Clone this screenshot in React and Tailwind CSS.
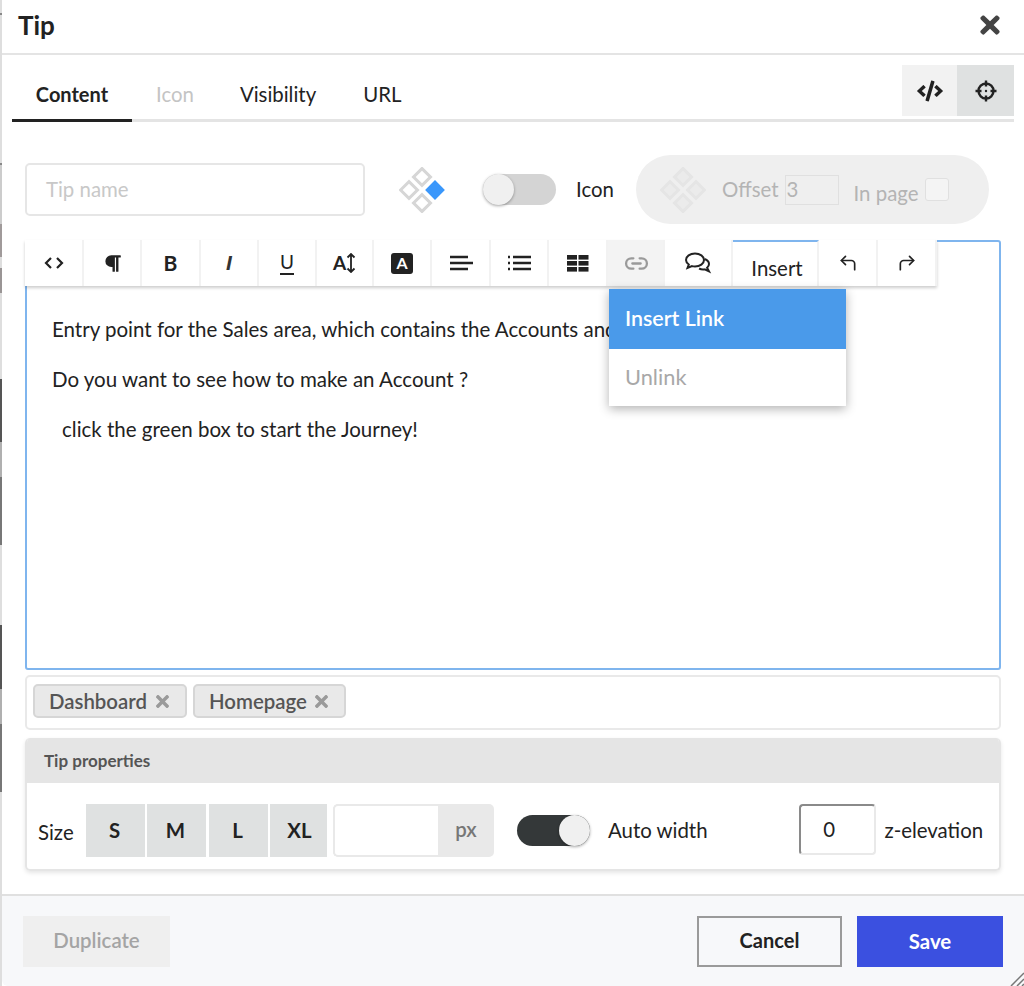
import React from "react";
import { FaTimes, FaCode, FaParagraph } from "react-icons/fa";
import { CornerUpLeft, CornerUpRight, Link2 } from "lucide-react";

const I = ({ children, w = 20, h = 20, vb = "0 0 20 20" }) => (
  <svg width={w} height={h} viewBox={vb} fill="none" stroke="currentColor" strokeWidth="2">{children}</svg>
);

const Diamond = ({ faded }) => (
  <svg width="46" height="46" viewBox="0 0 46 46">
    {[[23, 10], [10, 23], [23, 36]].map(([x, y]) => (
      <rect key={x + "-" + y} x={x - 6} y={y - 6} width="12" height="12" transform={`rotate(45 ${x} ${y})`} fill={faded ? "#ebebeb" : "none"} stroke={faded ? "#e5e5e5" : "#d6d6d6"} strokeWidth="3" />
    ))}
    <rect x={30} y={17} width="12" height="12" transform="rotate(45 36 23)" fill={faded ? "#ebebeb" : "#3a97fb"} stroke={faded ? "#e5e5e5" : "#3a97fb"} strokeWidth={faded ? 3 : 2} />
  </svg>
);

const Tool = ({ w, children, className = "" }) => (
  <div style={{ width: w }} className={`flex h-full shrink-0 items-center justify-center border-r-2 border-[#f2f2f2] text-[#222] ${className}`}>
    {children}
  </div>
);

const Toggle = ({ on }) => (
  <div className={`relative h-[31px] w-[73px] shrink-0 rounded-full ${on ? "bg-[#343839]" : "bg-[#d4d4d4]"}`}>
    <div className={`absolute top-0 h-[31px] w-[31px] rounded-full bg-[#f0f0f0] shadow-[0_1px_3px_rgba(0,0,0,0.35)] ${on ? "right-0" : "left-0"}`} />
  </div>
);

const Tag = ({ children, w }) => (
  <div style={{ width: w }} className="flex h-[34px] shrink-0 items-center justify-between rounded-[5px] border-2 border-[#d6d6d6] bg-[#e9e9e9] pl-[14px] pr-[13px] text-[20.4px] font-semibold text-[#555]">
    <span>{children}</span>
    <FaTimes className="text-[19px] text-[#9a9a9a]" />
  </div>
);

const Size = ({ children, w, className = "pr-[2px]" }) => (
  <div style={{ width: w }} className={`flex h-full shrink-0 items-center justify-center bg-[#dfe1e1] text-[20.4px] font-bold text-[#222] ${className}`}>{children}</div>
);

export default function App() {
  return (
    <div className="flex h-[986px] w-[1024px] overflow-hidden bg-white font-['Lato',sans-serif] text-[20.4px] text-[#222]">
      <div className="flex w-[2px] shrink-0 flex-col bg-[#dedede]">
        <div className="h-[13px]" />
        <div className="h-[2px] bg-[#888]" />
        <div className="h-[148px]" />
        <div className="h-[2px] bg-[#888]" />
        <div className="h-[59px] bg-[#cccccc]" />
        <div className="h-[33px] bg-[#a09a9a]" />
        <div className="h-[11px]" />
        <div className="h-[25px] bg-[#9a9595]" />
        <div className="h-[86px]" />
        <div className="h-[63px] bg-[#555]" />
        <div className="h-[35px] bg-[#b0b0b0]" />
        <div className="h-[68px] bg-[#777]" />
        <div className="h-[80px]" />
        <div className="h-[64px] bg-[#555]" />
        <div className="h-[35px] bg-[#b0b0b0]" />
        <div className="h-[68px] bg-[#777]" />
        <div className="flex-1" />
      </div>
      <div className="relative flex min-w-0 flex-1 flex-col">
        <header className="flex h-[55px] shrink-0 items-center justify-between border-b-2 border-[#e4e4e4] pb-[3px] pl-[16px] pr-[20px]">
          <h1 className="text-[26px] font-bold leading-none text-[#222]">Tip</h1>
          <FaTimes className="text-[28px] text-[#444]" />
        </header>

        <div className="ml-[10px] mr-[10px] mt-[10px] flex h-[57px] shrink-0 items-start justify-between border-b-[3px] border-[#e4e4e4]">
          <div className="flex h-[57px] items-center">
            <div className="flex h-[57px] w-[120px] items-center justify-center border-b-[3px] border-[#222] pt-[3px] text-[20px] font-bold">Content</div>
            <div className="ml-[24px] pt-[2px] text-[#c4c4c4]">Icon</div>
            <div className="ml-[46px] pt-[2px]">Visibility</div>
            <div className="ml-[47px] pt-[2px]">URL</div>
          </div>
          <div className="flex h-[51px]">
            <div className="flex w-[55px] items-center justify-center bg-[#f2f2f2] text-[#222]"><FaCode className="text-[26px]" /></div>
            <div className="flex w-[57px] items-center justify-center bg-[#dfe1e1]">
              <I w={24} h={24} vb="0 0 24 24">
                <circle cx="12" cy="12" r="7.5" strokeWidth="2.4" />
                <path d="M12 1.5v6M12 16.5v6M1.5 12h6M16.5 12h6" strokeWidth="2.4" />
                <circle cx="12" cy="12" r="1.2" fill="currentColor" stroke="none" />
              </I>
            </div>
          </div>
        </div>

        <div className="ml-[23px] mt-[33px] flex h-[69px] shrink-0 items-center">
          <div className="flex h-[53px] w-[340px] items-center rounded-[5px] border-2 border-[#e6e6e6] pl-[19px] text-[#c8c8c8]">Tip name</div>
          <div className="ml-[34px] flex w-[46px] justify-center"><Diamond /></div>
          <div className="ml-[38px]"><Toggle /></div>
          <div className="ml-[20px]">Icon</div>
          <div className="ml-[22px] flex h-[69px] w-[353px] items-center rounded-full bg-[#efefef] pl-[24px]">
            <Diamond faded />
            <span className="ml-[16px] pb-[1px] text-[#b4b4b4]">Offset</span>
            <div className="ml-[6px] flex h-[30px] w-[54px] items-center border border-[#e0e0e0] pl-[1px] text-[#b4b4b4]">3</div>
            <span className="ml-[15px] mt-[8px] text-[#b4b4b4]">In page</span>
            <div className="ml-[7px] h-[23px] w-[24px] rounded-[3px] border border-[#e0e0e0] bg-[#f4f4f4]" />
          </div>
        </div>

        <div className="ml-[23px] mt-[16px] h-[430px] w-[976px] shrink-0 rounded-[3px] border-2 border-[#7fb5ee]">
          <div className="relative -ml-[2px] -mt-[2px] flex h-[46px] w-[912px] bg-white shadow-[0_2px_3px_rgba(0,0,0,0.2)]">
            <Tool w={59}><I><path d="M7 5 2 10l5 5M13 5l5 5-5 5" strokeWidth="2.2" /></I></Tool>
            <Tool w={58}><FaParagraph className="text-[19px]" /></Tool>
            <Tool w={59}><span className="text-[21px] font-bold">B</span></Tool>
            <Tool w={58}><span className="font-['Liberation_Sans',sans-serif] text-[21px] font-bold italic text-[#333]">I</span></Tool>
            <Tool w={58}>
              <span className="border-b-2 border-[#222] text-[19px] leading-[22px]">U</span>
            </Tool>
            <Tool w={57}>
              <span className="text-[19px] font-bold">A</span>
              <I w={10} h={20} vb="0 0 10 20"><path d="M5 1v18M1.5 4.5 5 1l3.5 3.5M1.5 15.5 5 19l3.5-3.5" strokeWidth="1.8" /></I>
            </Tool>
            <Tool w={58}>
              <div className="flex h-[21px] w-[22px] items-center justify-center rounded-[3px] bg-[#222] text-[16px] font-bold leading-none text-white">A</div>
            </Tool>
            <Tool w={59}><I w={24} h={20} vb="0 0 24 20"><path d="M1 4h18M1 10h23M1 16h18" strokeWidth="2.4" /></I></Tool>
            <Tool w={58}><I w={24} h={20} vb="0 0 24 20"><path d="M6 4h18M6 10h18M6 16h18" strokeWidth="2.4" /><path d="M1 4h2M1 10h2M1 16h2" strokeWidth="2.4" /></I></Tool>
            <Tool w={59}>
              <svg width="22" height="17" viewBox="0 0 22 17" fill="#222">
                <rect x="0" y="0" width="10" height="4.6" /><rect x="11.5" y="0" width="10" height="4.6" />
                <rect x="0" y="6" width="10" height="4.6" /><rect x="11.5" y="6" width="10" height="4.6" />
                <rect x="0" y="12" width="10" height="4.6" /><rect x="11.5" y="12" width="10" height="4.6" />
              </svg>
            </Tool>
            <Tool w={57} className="bg-[#f3f3f3]"><Link2 size={25} className="ml-[2px] text-[#9a9a9a]" strokeWidth={2.2} /></Tool>
            <Tool w={68}>
              <svg width="28" height="22" viewBox="0 0 28 22" fill="none" stroke="#222" strokeWidth="2">
                <path d="M11 1.5c5 0 9 2.900 9 6.500s-4 6.500-9 6.500c-1 0-2-.1-3-.4l-4.500 1.900 1.300-3.500C3 11.200 2 9.700 2 8c0-3.600 4-6.500 9-6.500Z" />
                <path d="M20.5 7c2.800 1 4.500 3 4.500 5 0 1.400-.7 2.700-1.900 3.700l1.900 3.600-4.300-1.900c-.6.100-1.200.1-1.700.1-1.500 0-2.800-.4-3.900-1" />
              </svg>
            </Tool>
            <Tool w={86} className="border-t-2 border-t-[#7fb5ee]"><span className="-mb-[8px] ml-[4px] leading-none">Insert</span></Tool>
            <Tool w={59}><CornerUpLeft size={20} strokeWidth={2} /></Tool>
            <Tool w={59} className="border-r-0"><CornerUpRight size={20} strokeWidth={2} /></Tool>

            <div className="absolute left-[584px] top-[49px] z-10 w-[237px] bg-white shadow-[0_3px_10px_rgba(0,0,0,0.3)]">
              <div className="flex h-[60px] items-center bg-[#4a9aea] pb-[2px] pl-[16px] text-[21.4px] font-semibold text-white">Insert Link</div>
              <div className="flex h-[57px] items-center pb-[1px] pl-[16px] text-[21.8px] text-[#a8a8a8]">Unlink</div>
            </div>
          </div>
          <div className="pl-[25px] pt-[30px] text-[20.5px] leading-[26px] text-[#222]">
            <p>Entry point for the Sales area, which contains the Accounts and</p>
            <p className="mt-[24px]">Do you want to see how to make an Account ?</p>
            <p className="ml-[10px] mt-[24px]">click the green box to start the Journey!</p>
          </div>
        </div>

        <div className="ml-[23px] mt-[5px] flex h-[55px] w-[976px] shrink-0 items-start gap-[6px] rounded-[5px] border-2 border-[#e9e9e9] pl-[6px] pt-[7px]">
          <Tag w={154}>Dashboard</Tag>
          <Tag w={153}>Homepage</Tag>
        </div>

        <section className="ml-[23px] mt-[8px] h-[133px] w-[976px] shrink-0 overflow-hidden rounded-[5px] border-2 border-t-0 border-[#e5e5e5] shadow-[0_2px_4px_rgba(0,0,0,0.1)]">
          <div className="-ml-[2px] -mr-[2px] flex h-[45px] items-center bg-[#e5e5e5] pl-[19px] text-[17px] font-bold text-[#555]">Tip properties</div>
          <div className="flex h-[86px] items-start pt-[21px]">
            <span className="ml-[11px] mt-[16px] w-[48px] leading-[24px]">Size</span>
            <div className="flex h-[53px]">
              <Size w={59}>S</Size>
              <div className="w-[2px]" />
              <Size w={59}>M</Size>
              <div className="w-[3px]" />
              <Size w={59}>L</Size>
              <div className="w-[2px]" />
              <Size w={57} className="pl-[2px]">XL</Size>
            </div>
            <div className="ml-[6px] flex h-[53px] w-[161px] overflow-hidden rounded-[5px] bg-[#e9e9e9]">
              <div className="h-full w-[105px] rounded-l-[5px] border-2 border-r-0 border-[#e9e9e9] bg-white" />
              <div className="flex flex-1 items-center justify-center pb-[3px] font-semibold text-[#777]">px</div>
            </div>
            <div className="ml-[23px] mt-[11px]"><Toggle on /></div>
            <span className="ml-[18px] mt-[14px] leading-[24px]">Auto width</span>
            <div className="ml-[91px] flex h-[51px] w-[77px] items-center justify-center rounded-[4px] border-2 border-b-[#e9e9e9] border-l-[#8a8a8a] border-r-[#e9e9e9] border-t-[#8a8a8a] pr-[16px]">0</div>
            <span className="ml-[9px] mt-[14px] leading-[24px]">z-elevation</span>
          </div>
        </section>

        <footer className="mt-[23px] flex min-h-0 flex-1 items-start rounded-bl-[6px] border-t-2 border-[#e0e0e0] bg-[#f7f8fa] pl-[21px] pt-[20px]">
          <div className="flex h-[51px] w-[147px] items-center justify-center bg-[#efefef] pb-[3px] font-semibold text-[#a4a4a4]">Duplicate</div>
          <div className="ml-[527px] flex h-[51px] w-[145px] items-center justify-center border-2 border-[#9a9a9a] pb-[3px] text-[20px] font-bold text-[#222]">Cancel</div>
          <div className="ml-[15px] flex h-[51px] w-[146px] items-center justify-center bg-[#3b50e0] pb-[1px] font-bold text-white">Save</div>
        </footer>
        <svg className="absolute bottom-0 right-0" width="14" height="14" viewBox="0 0 14 14" stroke="#777" strokeWidth="1.5" fill="none">
          <path d="M1 14 14 1M7 14l7-7M12 14l2-2" />
        </svg>
      </div>
    </div>
  );
}
